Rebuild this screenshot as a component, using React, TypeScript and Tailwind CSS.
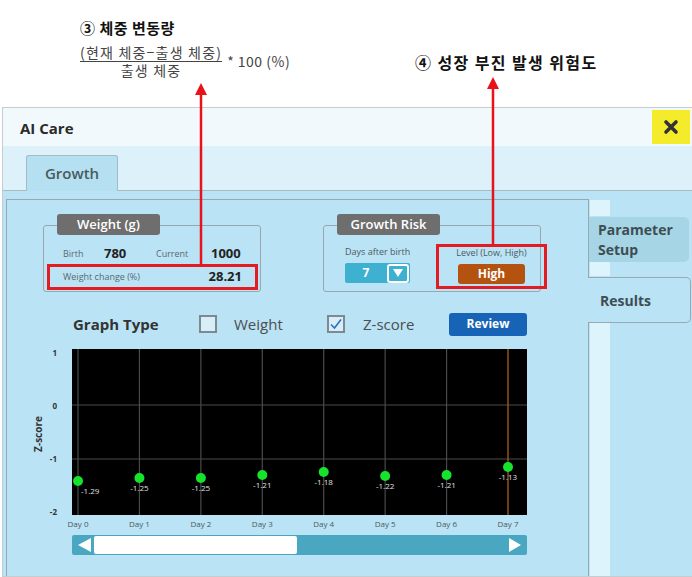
import React from "react";

const FONT = { fontFamily: '"Open Sans", "Noto Sans", "Noto Sans CJK KR", sans-serif' };
const KR = { fontFamily: '"Noto Sans CJK KR", "Noto Sans", sans-serif' };

const POINTS = [
  { day: 0, y: 139, v: "-1.29" },
  { day: 1, y: 136, v: "-1.25" },
  { day: 2, y: 136, v: "-1.25" },
  { day: 3, y: 133, v: "-1.21" },
  { day: 4, y: 130, v: "-1.18" },
  { day: 5, y: 134, v: "-1.22" },
  { day: 6, y: 133, v: "-1.21" },
  { day: 7, y: 125, v: "-1.13" },
];

const dayX = (i: number) => 47 + 61.43 * i;

function Badge({ label }: { label: string }) {
  return (
    <div className="absolute -top-[12px] left-[13px] w-[103px] h-[21px] rounded-[3px] bg-[#6e6e6e] text-white text-[13px] font-semibold flex items-center justify-center">
      {label}
    </div>
  );
}

function Checkbox({ checked }: { checked?: boolean }) {
  return (
    <div className="w-[18px] h-[18px] border-2 border-[#7d8a90] bg-[#d7eef8] flex items-center justify-center">
      {checked && (
        <svg width="14" height="14" viewBox="0 0 14 14">
          <path d="M2 7.5 L5.5 11 L12 2.5" fill="none" stroke="#2b6fc4" strokeWidth="1.6" />
        </svg>
      )}
    </div>
  );
}

function Chart() {
  return (
    <svg width="500" height="190" className="block">
      <rect x="41" y="7" width="455" height="166" fill="#000" />
      {[63, 117].map(y => (
        <line key={y} x1="41" x2="496" y1={y} y2={y} stroke="#4a4a4a" strokeWidth="1.2" />
      ))}
      {POINTS.map(p => (
        <line
          key={p.day}
          x1={dayX(p.day)}
          x2={dayX(p.day)}
          y1="7"
          y2="173"
          stroke={p.day === 7 ? "#b5651d" : "#4a4a4a"}
          strokeWidth="1.2"
        />
      ))}
      {POINTS.map(p => (
        <g key={p.day}>
          <circle cx={dayX(p.day)} cy={p.y} r="5" fill="#16e42c" />
          <text
            x={p.day === 0 ? dayX(p.day) + 3 : dayX(p.day)}
            y={p.y + 13}
            textAnchor={p.day === 0 ? "start" : "middle"}
            fontSize="8"
            fill="#e0e0e0"
          >
            {p.v}
          </text>
          <text x={dayX(p.day)} y="185" textAnchor="middle" fontSize="8" fill="#4b5a60">
            Day {p.day}
          </text>
        </g>
      ))}
      {[
        { l: "1", y: 11 },
        { l: "0", y: 64 },
        { l: "-1", y: 117 },
        { l: "-2", y: 170 },
      ].map(t => (
        <text key={t.l} x="26" y={t.y + 3} textAnchor="end" fontSize="8" fontWeight="700" fill="#333">
          {t.l}
        </text>
      ))}
      <text
        transform="translate(11 92) rotate(-90)"
        textAnchor="middle"
        fontSize="10"
        fontWeight="700"
        fill="#333"
      >
        Z-score
      </text>
    </svg>
  );
}

export default function App() {
  return (
    <div className="relative w-[692px] h-[577px] overflow-hidden bg-white text-[#333]" style={FONT}>
      {/* annotations */}
      <div className="flex h-[107px]" style={KR}>
        <div className="pl-[80px] pt-[18px] w-[415px]">
          <div className="text-[15px] font-bold leading-[20px] tracking-[0.5px] text-[#111]">③ 체중 변동량</div>
          <div className="flex items-center mt-[6px] text-[#444]">
            <div className="flex flex-col items-center text-[14px] leading-[17px] tracking-[1.2px]">
              <span className="border-b border-[#444]">(현재 체중−출생 체중)</span>
              <span>출생 체중</span>
            </div>
            <span className="ml-[5px] text-[14px] tracking-[0.5px]">* 100 (%)</span>
          </div>
        </div>
        <div className="pt-[52px] text-[16px] font-bold leading-[20px] tracking-[1.4px] text-[#111]">④ 성장 부진 발생 위험도</div>
      </div>

      {/* dialog */}
      <div className="flex flex-col h-[470px] ml-[2px] border-t border-l border-b border-[#c4cdd1]">
        <div className="h-[38px] bg-[#f2f9fc] flex items-start justify-between">
          <div className="pl-[17px] pt-[9px] text-[15px] font-bold text-[#2b2b2b]">AI Care</div>
          <div className="mt-[2px] mr-[2px] w-[38px] h-[34px] bg-[#f4ec2a] flex items-center justify-center">
            <svg width="16" height="16" viewBox="0 0 16 16">
              <path d="M3 3 L13 13 M13 3 L3 13" stroke="#333" strokeWidth="3.6" strokeLinecap="round" />
            </svg>
          </div>
        </div>

        <div className="h-[45px] bg-[#dcf1fa] flex items-end pl-[23px] border-b border-[#a8b9c0]">
          <div className="w-[92px] h-[36px] -mb-px bg-[#b5e0f2] border border-b-0 border-[#a8b9c0] rounded-t-[3px] flex items-center justify-center text-[15px] font-semibold text-[#4a5a60]">
            Growth
          </div>
        </div>

        <div className="flex-1 bg-[#bae3f5] flex pt-[8px]">
          {/* left panel */}
          <div className="ml-[3px] w-[582px] border-t border-l border-[#97aab2] flex flex-col">
            <div className="flex pl-[36px] mt-[25px]">
              <div className="relative w-[218px] h-[67px] border border-[#98a7ad] rounded-[3px] pt-[20px]">
                <Badge label="Weight (g)" />
                <div className="flex items-center h-[16px] pl-[19px]">
                  <span className="w-[41px] text-[9px] text-[#5b6a70]">Birth</span>
                  <span className="w-[52px] text-[13px] font-bold text-[#222]">780</span>
                  <span className="w-[55px] text-[9px] text-[#5b6a70]">Current</span>
                  <span className="text-[13px] font-bold text-[#222]">1000</span>
                </div>
                <div className="mt-[2px] ml-[3px] mr-[2px] h-[26px] border-[3px] border-[#e31b23] flex items-center justify-between pl-[13px] pr-[13px]">
                  <span className="text-[9px] text-[#5b6a70]">Weight change (%)</span>
                  <span className="text-[13px] font-bold text-[#222]">28.21</span>
                </div>
              </div>

              <div className="relative ml-[62px] w-[218px] h-[67px] border border-[#98a7ad] rounded-[3px] flex pl-[21px]">
                <Badge label="Growth Risk" />
                <div className="flex flex-col pt-[20px]">
                  <span className="text-[9px] leading-[12px] text-[#4b5a60]">Days after birth</span>
                  <div className="mt-[5px] w-[65px] h-[20px] rounded-[2px] bg-[#3db1cf] flex items-center">
                    <span className="flex-1 text-center text-white text-[12px] font-bold">7</span>
                    <div className="w-[22px] h-[19px] mr-[1px] border-2 border-white rounded-[3px] flex items-center justify-center">
                      <svg width="10" height="8" viewBox="0 0 10 8">
                        <path d="M0 0 H10 L5 8 Z" fill="#fff" />
                      </svg>
                    </div>
                  </div>
                </div>
                <div className="ml-auto -mr-[7px] mt-[18px] w-[111px] h-[45px] border-[3px] border-[#e31b23] flex flex-col items-center">
                  <span className="text-[9px] leading-[12px] text-[#4b5a60]">Level (Low, High)</span>
                  <div className="mt-[5px] w-[67px] h-[20px] rounded-[3px] bg-[#b4520f] flex items-center justify-center text-white text-[12px] font-bold">
                    High
                  </div>
                </div>
              </div>
            </div>

            <div className="flex items-center h-[22px] mt-[21px] pl-[66px]">
              <span className="w-[126px] text-[15px] font-bold text-[#333]">Graph Type</span>
              <Checkbox />
              <span className="ml-[17px] w-[93px] text-[15px] text-[#4a4f52]">Weight</span>
              <Checkbox checked />
              <span className="ml-[18px] w-[86px] text-[15px] text-[#4a4f52]">Z-score</span>
              <div className="w-[78px] h-[23px] rounded-[3px] bg-[#1763b5] flex items-center justify-center text-white text-[12px] font-bold">
                Review
              </div>
            </div>

            <div className="mt-[7px] pl-[24px]">
              <Chart />
            </div>

            <div className="mt-[3px] ml-[65px] w-[455px] h-[20px] rounded-[2px] bg-[#4aa7c2] flex items-center">
              <svg width="22" height="20" viewBox="0 0 22 20" className="shrink-0">
                <path d="M6 10 L19 3 V17 Z" fill="#fff" />
              </svg>
              <div className="w-[203px] h-[18px] rounded-[2px] bg-white" />
              <svg width="22" height="20" viewBox="0 0 22 20" className="ml-auto shrink-0">
                <path d="M16 10 L4 3 V17 Z" fill="#fff" />
              </svg>
            </div>
          </div>

          {/* right tabs */}
          <div className="flex-1 flex flex-col">
            <div className="h-[18px] border-l border-[#97aab2] pl-[1px] pt-[1px]">
              <div className="w-[20px] h-[16px] bg-[#def4fc]" />
            </div>
            <div className="h-[45px] border-l border-[#97aab2] flex">
              <div className="w-[100px] bg-[#a6d6e6] rounded-r-[5px] pl-[9px] pt-[3px] text-[14px] leading-[20px] font-bold text-[#3e4d52]">
                Parameter
                <br />
                Setup
              </div>
            </div>
            <div className="h-[15px] border-l border-[#97aab2] pl-[1px]">
              <div className="w-[20px] h-[14px] bg-[#def4fc]" />
            </div>
            <div className="h-[46px] w-[103px] border-t border-r border-b border-[#97aab2] rounded-r-[5px] flex items-center pl-[12px] text-[14px] font-bold text-[#3e4d52]">
              Results
            </div>
            <div className="flex-1 border-l border-[#97aab2] pl-[1px]">
              <div className="w-[20px] h-full bg-[#def4fc]" />
            </div>
          </div>
        </div>
      </div>

      {/* red annotation arrows */}
      <svg className="absolute left-0 top-0 pointer-events-none" width="692" height="577">
        <line x1="201" y1="92" x2="201" y2="265" stroke="#e8121a" strokeWidth="2.5" />
        <path d="M201 83 L195 95 H207 Z" fill="#e8121a" />
        <line x1="493" y1="86" x2="493" y2="245" stroke="#e8121a" strokeWidth="2.5" />
        <path d="M493 77 L487 89 H499 Z" fill="#e8121a" />
      </svg>
    </div>
  );
}
